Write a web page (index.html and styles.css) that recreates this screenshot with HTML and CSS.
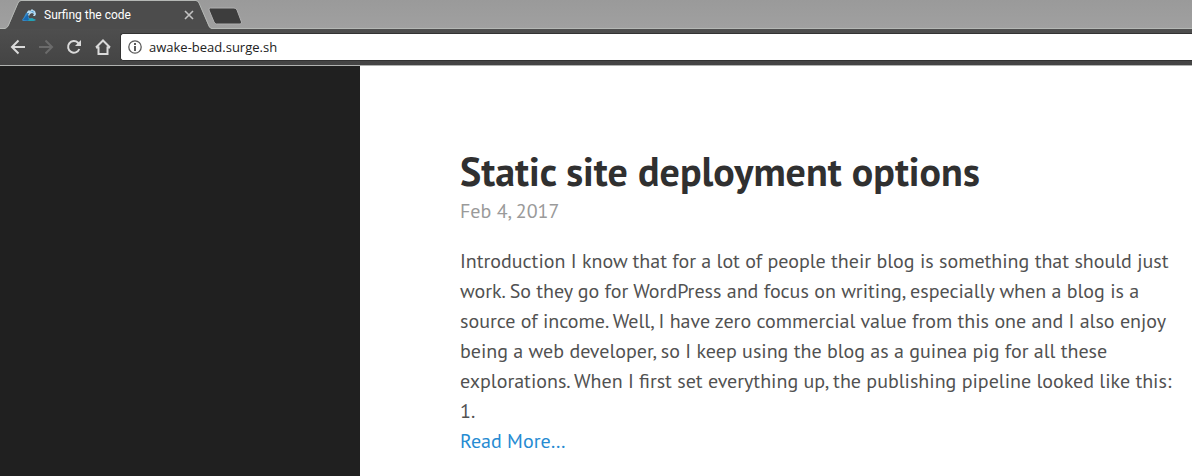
FILE: index.html
```html
<!DOCTYPE html>
<html lang="en">
<head>
<meta charset="utf-8">
<title>Surfing the code</title>
<link rel="stylesheet" href="styles.css">
</head>
<body>
<header class="browser">
  <div class="tab-strip">
    <div class="tab">
      <svg class="tab-shape" width="212" height="29" viewBox="0 0 212 29" aria-hidden="true">
        <path d="M0 29L6 28Q8 27 9 25L18 3Q19 1 21 1H196Q198 1 199 3L209 27L212 29Z" fill="#4c4c4c"/>
        <path d="M0 28.500H5Q7 28 8 26L18 3Q19 .5 21 .5H196Q198 .5 199 3L209 26Q210 28.500 212 28.500" fill="none" stroke="#b5b8b5"/>
      </svg>
      <svg class="favicon" width="16" height="16" viewBox="0 0 16 16" aria-hidden="true">
        <path d="M1 13L3 10L5 6L8 4L7 8L8 11L12 12L15 13L12 14H2Z" fill="#398bc8"/>
        <path d="M2 13L5 9L7 7L7 11L10 14Z" fill="#1769b1"/>
        <path d="M6 5L8 3L9 4L11 2L12 3L14 4L15 7L14 9L12 9L13 7L11 6L9 7L8 9L7 8L8 6L6 6Z" fill="#b5dbf2"/>
        <path d="M9 5L12 4L13 6L11 5Z" fill="#4d9bd2"/>
        <path d="M8 12L11 11L15 13L12 14H7Z" fill="#22a4b4"/>
      </svg>
      <span class="tab-title">Surfing the code</span>
      <button class="tab-close" aria-label="Close tab"><svg width="10" height="10" viewBox="0 0 10 10"><path d="M1 1L9 9M9 1L1 9" stroke="#c3c3c3" stroke-width="1.6"/></svg></button>
    </div>
    <button class="new-tab" aria-label="New tab"><svg width="36" height="18" viewBox="0 0 36 18"><path d="M2.500 1H26Q28 1 29 3L33.500 15Q34 17 32 17H8.500Q7 17 6 15L1 3Q.5 1 2.500 1Z" fill="#3d3d3d" stroke="#b0b0b0"/></svg></button>
  </div>
  <nav class="toolbar" aria-label="Browser">
    <button class="tool" aria-label="Back"><svg width="16" height="16" viewBox="0 0 16 16"><path d="M15 8H2M8.500 1.500L2 8L8.500 14.500"/></svg></button>
    <button class="tool" aria-label="Forward" disabled><svg width="16" height="16" viewBox="0 0 16 16"><path d="M1 8H14M7.500 1.500L14 8L7.500 14.500"/></svg></button>
    <button class="tool" aria-label="Reload"><svg width="16" height="16" viewBox="0 0 16 16"><path d="M13.300 10A5.800 5.800 0 1 1 12 3.800L13 5"/><path class="solid" d="M15 1V7H9Z"/></svg></button>
    <button class="tool" aria-label="Home"><svg width="18" height="18" viewBox="0 0 18 18"><path d="M2 9.500L9 2.500L16 9.500M2 9.500H4.500V16H13.500V9.500H16"/></svg></button>
    <div class="address">
      <svg width="14" height="14" viewBox="0 0 14 14" aria-hidden="true"><circle cx="7" cy="7" r="6.200" fill="none" stroke="#5a5a5a" stroke-width="1.300"/><path d="M6 3H8V5H6ZM6 6H8V11H6Z" fill="#5a5a5a"/></svg>
      <input class="url" type="text" value="awake-bead.surge.sh" aria-label="Address" spellcheck="false">
    </div>
  </nav>
</header>
<div class="page">
  <aside class="sidebar"></aside>
  <main class="content">
    <article class="post">
      <h1 class="post-title">Static site deployment options</h1>
      <time class="post-date" datetime="2017-02-04">Feb 4, 2017</time>
      <p class="post-text">Introduction I know that for a lot of people their blog is something that should just work. So they go for WordPress and focus on writing, especially when a blog is a source of income. Well, I have zero commercial value from this one and I also enjoy being a web developer, so I keep using the blog as a guinea pig for all these explorations. When I first set everything up, the publishing pipeline looked like this: 1.</p>
      <a class="read-more" href="#">Read More…</a>
    </article>
  </main>
</div>
</body>
</html>
```
FILE: styles.css
```css
* { box-sizing: border-box; }
body {
  display: flex;
  flex-direction: column;
  min-height: 100vh;
  margin: 0;
  background: #fff;
  font-family: "PT Sans", Lato, sans-serif;
}
button { padding: 0; border: 0; background: none; }
svg { display: block; }
.browser { font-family: "Segoe UI", "Open Sans", sans-serif; }
.tab-strip {
  display: flex;
  height: 29px;
  background: linear-gradient(#9a9a9a, #a0a0a0);
  border-bottom: 1px solid #b5b8b5;
}
.tab {
  position: relative;
  display: flex;
  align-items: center;
  width: 208px;
  height: 29px;
  padding: 0 14px 0 21px;
}
.tab-shape { position: absolute; top: 0; left: 0; }
.favicon, .tab-title, .tab-close { position: relative; }
.tab-title {
  flex: 1;
  margin-left: 7px;
  color: #fff;
  font-family: Roboto, sans-serif;
  font-size: 12px;
  line-height: 16px;
  white-space: nowrap;
}
.new-tab { align-self: flex-end; margin-bottom: 3px; }
.toolbar {
  display: flex;
  align-items: center;
  height: 37px;
  padding-left: 10px;
  background: linear-gradient(#4e4e4e, #444);
  border-bottom: 1px solid #b0b2b0;
}
.tool {
  display: flex;
  flex: none;
  width: 28px;
}
.tool path { fill: none; stroke: #dadada; stroke-width: 2; }
.tool .solid { fill: #dadada; stroke: none; }
.tool:disabled path { stroke: #6b6b6b; }
.address {
  display: flex;
  flex: 1;
  align-items: center;
  gap: 7px;
  height: 28px;
  margin-left: -2px;
  padding-left: 7px;
  background: #fff;
  border: 1px solid #333;
  border-right: 0;
  border-radius: 3px 0 0 3px;
}
.url {
  flex: 1;
  padding: 0;
  border: 0;
  outline: 0;
  background: none;
  color: #222;
  font: 13px/18px "Segoe UI", "Open Sans", sans-serif;
}
.page { display: flex; flex: 1; }
.sidebar { flex: none; width: 360px; background: #202020; }
.content { flex: 1; padding: 80px 12px 20px 100px; }
.post { color: #515151; font-size: 20px; line-height: 30px; }
.post-title {
  margin: 0;
  color: #303030;
  font-size: 40px;
  line-height: 50px;
}
.post-date { display: block; color: #9a9a9a; }
.post-text { margin: 20px 0 0; }
.read-more { color: #268bd2; text-decoration: none; }
```
